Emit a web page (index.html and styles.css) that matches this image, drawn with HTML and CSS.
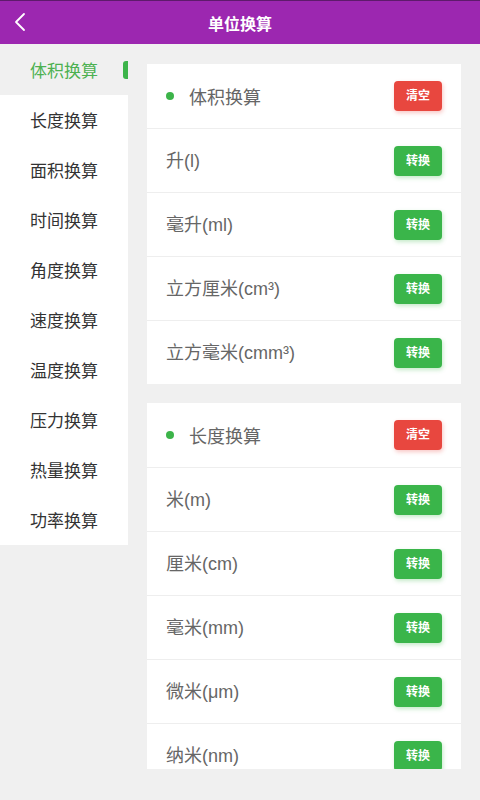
FILE: index.html
```html
<!DOCTYPE html>
<html lang="zh-CN">

<head>
    <meta charset="UTF-8">
    <meta name="viewport" content="width=device-width, initial-scale=1.0">
    <title>单位换算</title>
    <link rel="stylesheet" href="styles.css">
</head>

<body>
    <header class="topbar">
        <a href="#" class="back">
            <svg width="14" height="20" viewBox="0 0 14 20">
                <path d="M11 2 L3 10 L11 18" fill="none" stroke="#fff" stroke-width="1.8" stroke-linecap="round" stroke-linejoin="round" />
            </svg>
        </a>
        <h1>单位换算</h1>
    </header>

    <div class="page">
        <ul class="menu">
            <li class="active">体积换算</li>
            <li>长度换算</li>
            <li>面积换算</li>
            <li>时间换算</li>
            <li>角度换算</li>
            <li>速度换算</li>
            <li>温度换算</li>
            <li>压力换算</li>
            <li>热量换算</li>
            <li>功率换算</li>
        </ul>

        <div class="content">
            <div class="card">
                <div class="row head">
                    <span class="title"><i class="dot"></i>体积换算</span>
                    <a href="#" class="btn red">清空</a>
                </div>
                <div class="row"><span class="unit">升(l)</span><a href="#" class="btn">转换</a></div>
                <div class="row"><span class="unit">毫升(ml)</span><a href="#" class="btn">转换</a></div>
                <div class="row"><span class="unit">立方厘米(cm³)</span><a href="#" class="btn">转换</a></div>
                <div class="row"><span class="unit">立方毫米(cmm³)</span><a href="#" class="btn">转换</a></div>
            </div>

            <div class="card">
                <div class="row head">
                    <span class="title"><i class="dot"></i>长度换算</span>
                    <a href="#" class="btn red">清空</a>
                </div>
                <div class="row"><span class="unit">米(m)</span><a href="#" class="btn">转换</a></div>
                <div class="row"><span class="unit">厘米(cm)</span><a href="#" class="btn">转换</a></div>
                <div class="row"><span class="unit">毫米(mm)</span><a href="#" class="btn">转换</a></div>
                <div class="row"><span class="unit">微米(μm)</span><a href="#" class="btn">转换</a></div>
                <div class="row"><span class="unit">纳米(nm)</span><a href="#" class="btn">转换</a></div>
            </div>
        </div>
    </div>
</body>

</html>
```

FILE: styles.css
```css
body {
    font-family: 'Liberation Sans', 'Noto Sans CJK SC', sans-serif;
    margin: 0;
    padding: 0;
    background-color: #f0f0f0;
    height: 800px;
    overflow: hidden;
}

.topbar {
    height: 43px;
    border-top: 1px solid #5e1a6b;
    background-color: #9c27b0;
    display: flex;
    align-items: center;
    justify-content: center;
    position: relative;
}

.topbar h1 {
    margin: 0;
    color: white;
    font-size: 16px;
    font-weight: bold;
}

.back {
    position: absolute;
    left: 13px;
    top: 11px;
    display: flex;
}

.page {
    display: flex;
    align-items: flex-start;
}

.menu {
    list-style-type: none;
    margin: 1px 0 0;
    padding: 0;
    width: 128px;
    flex-shrink: 0;
    background-color: white;
}

.menu li {
    box-sizing: border-box;
    height: 50px;
    padding-top: 3px;
    line-height: 47px;
    text-align: center;
    font-size: 17px;
    color: #333;
    position: relative;
}

.menu li.active {
    background-color: #f0f0f0;
    color: #4cb151;
}

.menu li.active::after {
    content: "";
    position: absolute;
    right: 0;
    top: 16px;
    width: 5px;
    height: 18px;
    background-color: #3cb44a;
    border-radius: 3px 0 0 3px;
}

.content {
    flex: 1;
    padding: 20px 19px 0;
    height: 705px;
    overflow: hidden;
}

.card {
    background-color: white;
    margin-bottom: 19px;
}

.row {
    box-sizing: border-box;
    height: 64px;
    display: flex;
    align-items: center;
    justify-content: space-between;
    padding: 0 19px;
    border-top: 1px solid #eeeeee;
    font-size: 18px;
    color: #666;
}

.row.head {
    border-top: none;
}

.unit {
    margin-bottom: 3px;
}

.title {
    display: flex;
    align-items: center;
}

.dot {
    width: 8px;
    height: 8px;
    border-radius: 50%;
    background-color: #3cb44a;
    margin-right: 15px;
}

.btn {
    width: 48px;
    height: 30px;
    line-height: 30px;
    text-align: center;
    border-radius: 4px;
    background-color: #3ab54a;
    color: white;
    font-size: 12px;
    font-weight: bold;
    text-decoration: none;
    box-shadow: 1px 2px 4px rgba(58, 181, 74, 0.3);
}

.btn.red {
    background-color: #e8473f;
    box-shadow: 1px 2px 4px rgba(232, 71, 63, 0.3);
}
```
